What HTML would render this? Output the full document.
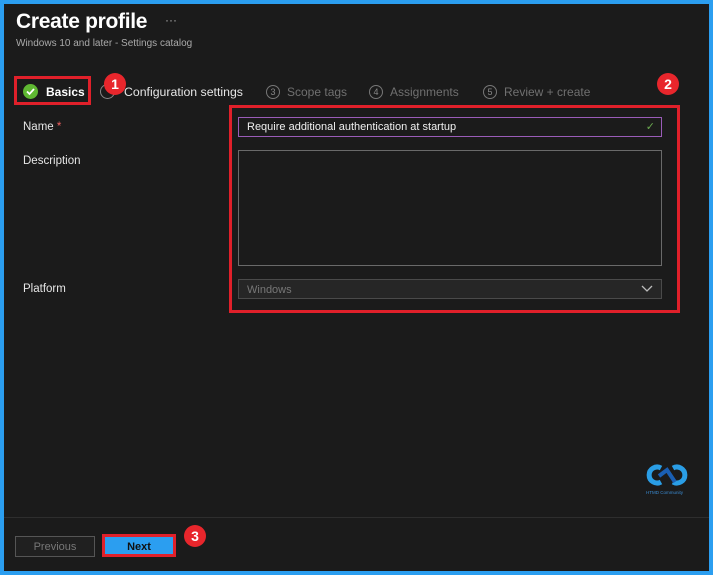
<!DOCTYPE html>
<html><head><style>
*{margin:0;padding:0;box-sizing:border-box}
body{width:713px;height:575px;background:#2b9ef0;font-family:"Liberation Sans",sans-serif;position:relative;overflow:hidden}
.main{position:absolute;left:4px;top:4px;width:705px;height:567px;background:#1b1b1b}
.a{position:absolute}
.t{color:#fff}
.red{border:3px solid #e0202a}
.badge{position:absolute;width:22px;height:22px;border-radius:50%;background:#e8262c;color:#fff;font-weight:bold;font-size:14px;text-align:center;line-height:22px}
.num{display:inline-block;width:14px;height:14px;border:1px solid #777;border-radius:50%;font-size:9px;text-align:center;line-height:12px;color:#888;margin-right:7px;vertical-align:1px}
.step{position:absolute;top:85px;color:#707070;font-size:12px}
.lbl{position:absolute;left:23px;color:#e6e6e6;font-size:11.5px}
</style></head><body>
<div class="main"></div>
<div class="a t" style="left:16px;top:10px;font-size:21px;font-weight:bold;letter-spacing:-0.3px">Create profile</div>
<div class="a" style="left:165px;top:13px;color:#aaa;font-size:12px">···</div>
<div class="a" style="left:16px;top:38px;color:#aaa;font-size:10px">Windows 10 and later - Settings catalog</div>
<div class="a red" style="left:14px;top:76px;width:77px;height:29px"></div>
<div class="a" style="left:23px;top:84px;width:15px;height:15px;border-radius:50%;background:#5fb832"><svg width="15" height="15"><path d="M4 7.5l2.5 2.5 4.5-5" stroke="#fff" stroke-width="1.8" fill="none"/></svg></div>
<div class="a t" style="left:46px;top:85px;font-size:12px;font-weight:bold">Basics</div>
<div class="a" style="left:100px;top:84px;width:15px;height:15px;border-radius:50%;border:1px solid #888"></div>
<div class="a t" style="left:124px;top:85px;font-size:12.3px;color:#e6e6e6">Configuration settings</div>
<div class="badge" style="left:104px;top:73px">1</div>
<div class="step" style="left:266px"><span class="num">3</span>Scope tags</div>
<div class="step" style="left:369px"><span class="num">4</span>Assignments</div>
<div class="step" style="left:483px"><span class="num">5</span>Review + create</div>
<div class="badge" style="left:657px;top:73px">2</div>
<div class="a red" style="left:229px;top:105px;width:451px;height:208px"></div>
<div class="lbl" style="top:121px">Name <span style="color:#f06060">*</span></div>
<div class="a" style="left:238px;top:117px;width:424px;height:20px;border:1px solid #9a5cb8;background:#1b1b1b;color:#f0f0f0;font-size:11px;padding:3px 8px">Require additional authentication at startup<span style="position:absolute;right:6px;top:2px;color:#6aa84f">✓</span></div>
<div class="lbl" style="top:155px">Description</div>
<div class="a" style="left:238px;top:150px;width:424px;height:116px;border:1px solid #6a6a6a"></div>
<div class="lbl" style="top:283px">Platform</div>
<div class="a" style="left:238px;top:279px;width:424px;height:20px;border:1px solid #4a4a4a;background:#262626;color:#777;font-size:11px;padding:4px 8px">Windows<svg class="a" style="right:8px;top:5px" width="12" height="8"><path d="M1 1l5 5 5-5" stroke="#bbb" stroke-width="1.3" fill="none"/></svg></div>
<svg class="a" style="left:645px;top:462px" width="44" height="28"><path d="M16 6a8 8 0 1 0 0 14" stroke="#2a9ee6" stroke-width="5" fill="none"/><path d="M28 6a8 8 0 1 1 0 14" stroke="#2a9ee6" stroke-width="5" fill="none"/><path d="M14 14l8-6 8 12" stroke="#1a5fb4" stroke-width="4" fill="none"/></svg>
<div class="a" style="left:646px;top:490px;color:#3a8ad0;font-size:4.5px">HTMD Community</div>
<div class="a" style="left:4px;top:517px;width:705px;height:1px;background:#2e2e2e"></div>
<div class="a" style="left:15px;top:536px;width:80px;height:21px;border:1px solid #555;background:#202020;color:#777;font-size:11px;text-align:center;line-height:19px;padding-top:1px">Previous</div>
<div class="a red" style="left:102px;top:534px;width:74px;height:23px;background:#2b9ef0;color:#111;font-size:11px;font-weight:bold;text-align:center;line-height:19px;padding-top:1px">Next</div>
<div class="badge" style="left:184px;top:525px">3</div>
</body></html>
